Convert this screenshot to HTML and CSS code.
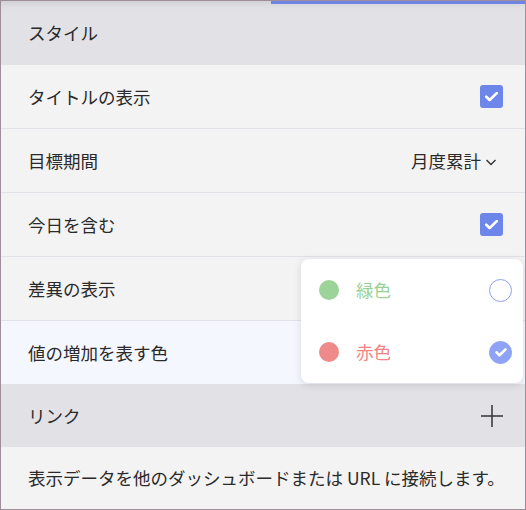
FILE: index.html
```html
<!DOCTYPE html>
<html lang="ja">
<head>
<meta charset="utf-8">
<link rel="stylesheet" href="styles.css">
</head>
<body>
<div class="panel">
  <div class="progress"></div>
  <div class="section-head">スタイル</div>
  <div class="row">
    <span>タイトルの表示</span>
    <span class="checkbox"><svg viewBox="0 0 24 24" width="23" height="23"><path d="M6.5 12.2l3.6 3.5 7.4-7.2" fill="none" stroke="#fff" stroke-width="2.8" stroke-linecap="round" stroke-linejoin="round"/></svg></span>
  </div>
  <div class="row">
    <span>目標期間</span>
    <span class="select">月度累計<svg viewBox="0 0 12 12" width="12" height="12"><path d="M1.5 4l4.5 4.5 4.5-4.5" fill="none" stroke="#333" stroke-width="1.4"/></svg></span>
  </div>
  <div class="row">
    <span>今日を含む</span>
    <span class="checkbox"><svg viewBox="0 0 24 24" width="23" height="23"><path d="M6.5 12.2l3.6 3.5 7.4-7.2" fill="none" stroke="#fff" stroke-width="2.8" stroke-linecap="round" stroke-linejoin="round"/></svg></span>
  </div>
  <div class="row">
    <span>差異の表示</span>
  </div>
  <div class="row row-active">
    <span>値の増加を表す色</span>
  </div>
  <div class="section-head link-head">
    <span>リンク</span>
    <svg class="plus" viewBox="0 0 24 24" width="24" height="24"><path d="M12 1v22M1 12h22" stroke="#333" stroke-width="1.5" fill="none"/></svg>
  </div>
  <div class="desc">表示データを他のダッシュボードまたは URL に接続します。</div>

  <div class="menu">
    <div class="option">
      <span class="dot dot-green"></span>
      <span class="label label-green">緑色</span>
      <span class="radio"></span>
    </div>
    <div class="option">
      <span class="dot dot-red"></span>
      <span class="label label-red">赤色</span>
      <span class="radio radio-on"><svg viewBox="0 0 24 24" width="24" height="24"><path d="M7.5 12.3l3 2.9 6-5.8" fill="none" stroke="#fff" stroke-width="2.6" stroke-linecap="round" stroke-linejoin="round"/></svg></span>
    </div>
  </div>
</div>
</body>
</html>
```

FILE: styles.css
```css
html, body {
  margin: 0;
  padding: 0;
  background: #fff;
}

.panel {
  position: relative;
  width: 524px;
  height: 508px;
  border: 1px solid #9e8e9b;
  display: flex;
  flex-direction: column;
  font-family: "Noto Sans CJK JP", "Noto Sans", sans-serif;
  font-size: 17.5px;
  line-height: 24px;
  color: #2a2a2a;
  background: #f3f3f3;
  overflow: hidden;
}

.progress {
  position: absolute;
  top: 0;
  left: 270px;
  right: 0;
  height: 3px;
  background: #6f84e2;
  z-index: 2;
}

.section-head {
  height: 64px;
  flex: none;
  display: flex;
  align-items: center;
  justify-content: space-between;
  padding: 0 20px 0 27px;
  background: #e2e2e6;
  box-shadow: inset 0 9px 8px -8px rgba(0, 0, 0, 0.12);
}

.link-head {
  height: 63px;
  box-shadow: none;
  padding-right: 21px;
}

.row {
  height: 63px;
  flex: none;
  display: flex;
  align-items: center;
  justify-content: space-between;
  padding: 0 22px 0 27px;
  border-bottom: 1px solid #e1e1e7;
  background: #f3f3f3;
}

.row-active {
  background: #f4f7fe;
  border-bottom: none;
}

.checkbox {
  width: 23px;
  height: 23px;
  border-radius: 3px;
  background: #6d86ea;
  display: flex;
}

.select {
  display: flex;
  align-items: center;
  gap: 4px;
  margin-right: 6px;
}

.select svg {
  margin-top: 2px;
}

.desc {
  flex: 1;
  display: flex;
  align-items: center;
  padding: 0 12px 0 27px;
  background: #f3f3f3;
}

.menu {
  position: absolute;
  left: 300px;
  top: 258px;
  width: 222px;
  height: 124px;
  background: #fff;
  border-radius: 8px;
  box-shadow: 0 2px 8px rgba(0, 0, 0, 0.12);
  display: flex;
  flex-direction: column;
  z-index: 3;
}

.option {
  flex: 1;
  display: flex;
  align-items: center;
  padding: 0 11px 0 18px;
}

.dot {
  width: 20px;
  height: 20px;
  border-radius: 50%;
  margin-right: 17px;
}

.dot-green { background: #9bd398; }
.dot-red { background: #ef8a8a; }

.label { flex: 1; }
.label-green { color: #98d395; }
.label-red { color: #ef8585; }

.radio {
  width: 21px;
  height: 21px;
  border: 1.5px solid #8e9ff3;
  border-radius: 50%;
  display: flex;
  align-items: center;
  justify-content: center;
}

.radio-on {
  background: #8ea2f6;
  border-color: #8ea2f6;
}

.radio-on svg {
  flex: none;
}
```
